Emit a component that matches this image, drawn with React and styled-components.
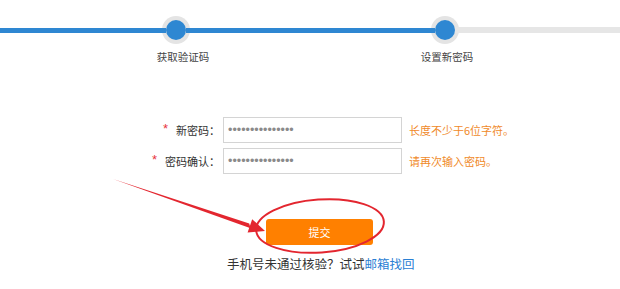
import React from "react";
import styled, { createGlobalStyle } from "styled-components";

const Global = createGlobalStyle`
  html, body { margin: 0; padding: 0; background: #fff; }
  body { font-family: "Noto Sans CJK SC", "Noto Sans", sans-serif; color: #333; }
  * { box-sizing: border-box; }
`;

const Page = styled.div`
  position: relative;
  width: 620px;
  height: 289px;
  overflow: hidden;
  background: #fff;
`;

const Track = styled.div`
  display: flex;
  align-items: flex-start;
  padding-top: 20px;
`;

const Line = styled.div`
  position: relative;
  z-index: 1;
  flex: ${(p) => (p.$grow ? "1 1 auto" : "0 0 auto")};
  width: ${(p) => (p.$w ? `${p.$w}px` : "auto")};
  height: ${(p) => (p.$done ? 5 : 6)}px;
  margin-top: ${(p) => (p.$done ? 7.5 : 7)}px;
  background: ${(p) => (p.$done ? "#2e87d2" : "#e6e6e6")};
`;

const Step = styled.div`
  flex: 0 0 20px;
  width: 20px;
  display: flex;
  flex-direction: column;
  align-items: center;
`;

const Dot = styled.div`
  width: 20px;
  height: 20px;
  border-radius: 50%;
  background: #2e87d2;
  box-shadow: 0 0 0 4px #e4e4e4;
`;

const StepLabel = styled.div`
  margin-top: 10px;
  margin-left: ${(p) => p.$shift || 0}px;
  white-space: nowrap;
  font-size: 10.5px;
  line-height: 14px;
  color: #444;
`;

const Form = styled.div`
  display: flex;
  flex-direction: column;
  gap: 5px;
  margin-top: 53px;
  padding-left: 140px;
`;

const Row = styled.div`
  display: flex;
  align-items: center;
  height: 26px;
`;

const LabelCell = styled.label`
  width: 80px;
  margin-right: 3px;
  display: flex;
  justify-content: flex-end;
  align-items: center;
  font-size: 11px;
  line-height: 14px;
  color: #333;
  white-space: nowrap;
`;

const Star = styled.span`
  font-family: "Liberation Sans", sans-serif;
  font-size: 13px;
  line-height: 14px;
  color: #e8343c;
  margin-right: 8px;
  position: relative;
  top: -1px;
`;

const Input = styled.input`
  width: 179px;
  height: 26px;
  padding: 0 4px;
  border: 1px solid #d4d4d4;
  background: #fff;
  font-family: "Liberation Sans", sans-serif;
  font-size: 12.5px;
  color: #8a8a8a;
  outline: none;
  border-radius: 0;
`;

const Hint = styled.span`
  margin-left: 7px;
  font-size: 11px;
  line-height: 14px;
  color: #f08a2a;
  white-space: nowrap;
`;

const ButtonRow = styled.div`
  display: flex;
  margin-top: 45px;
  padding-left: 266px;
`;

const Submit = styled.button`
  width: 107px;
  height: 26px;
  border: none;
  border-radius: 3px;
  background: #ff8000;
  color: #fff;
  font-family: "Noto Sans CJK SC", sans-serif;
  font-size: 11px;
  line-height: 14px;
  padding: 0;
  cursor: pointer;
`;

const Foot = styled.div`
  margin-top: 11px;
  padding-left: 227px;
  font-size: 12.5px;
  line-height: 16px;
  color: #333;
  white-space: nowrap;
`;

const Link = styled.a`
  color: #2a80d4;
  text-decoration: none;
`;

const Overlay = styled.svg`
  position: absolute;
  left: 0;
  top: 0;
  pointer-events: none;
`;

export default function App() {
  return (
    <Page>
      <Global />
      <Track>
        <Line $done $w={166} />
        <Step>
          <Dot />
          <StepLabel $shift={14}>获取验证码</StepLabel>
        </Step>
        <Line $done $w={249} />
        <Step>
          <Dot />
          <StepLabel $shift={4}>设置新密码</StepLabel>
        </Step>
        <Line $grow />
      </Track>

      <Form>
        <Row>
          <LabelCell>
            <Star>*</Star>新密码：
          </LabelCell>
          <Input type="password" defaultValue="123456789012345" />
          <Hint>长度不少于6位字符。</Hint>
        </Row>
        <Row>
          <LabelCell>
            <Star>*</Star>密码确认：
          </LabelCell>
          <Input type="password" defaultValue="123456789012345" />
          <Hint>请再次输入密码。</Hint>
        </Row>
      </Form>

      <ButtonRow>
        <Submit type="button">提交</Submit>
      </ButtonRow>

      <Foot>
        手机号未通过核验？试试<Link href="#">邮箱找回</Link>
      </Foot>

      <Overlay width="620" height="289" viewBox="0 0 620 289">
        <ellipse
          cx="320"
          cy="226"
          rx="64"
          ry="26.5"
          fill="none"
          stroke="#e3262f"
          strokeWidth="2"
          transform="rotate(-4 320 226)"
        />
        <polygon
          points="113,179 250.6,228.2 249.2,223.4"
          fill="#e3262f"
        />
        <polygon
          points="265,231 247.6,232.6 252.2,219.2"
          fill="#e3262f"
        />
      </Overlay>
    </Page>
  );
}
